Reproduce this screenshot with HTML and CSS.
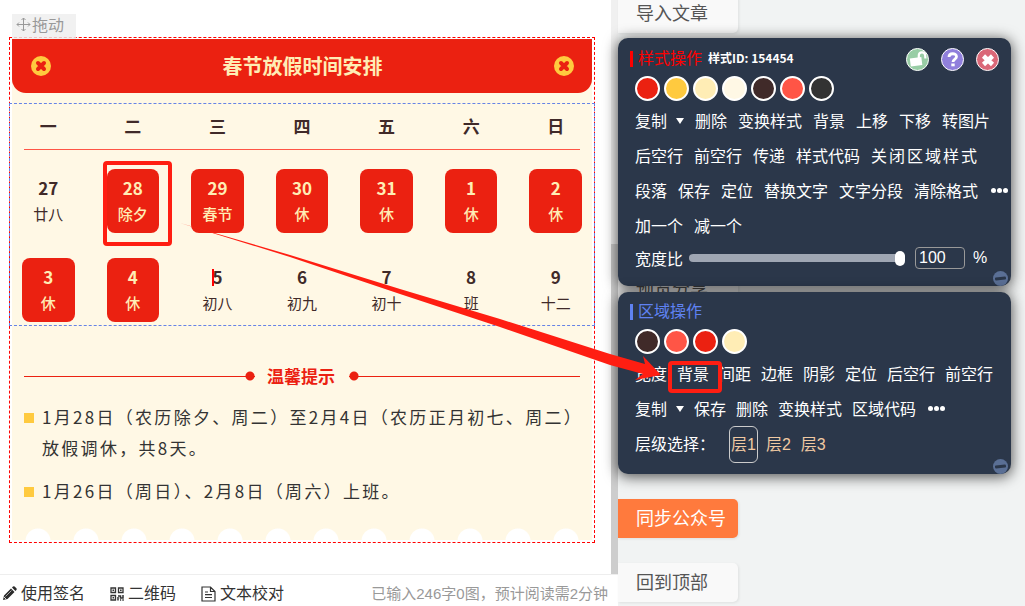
FILE: index.html
```html
<!DOCTYPE html>
<html lang="zh-CN">
<head>
    <meta charset="UTF-8">
    <meta name="viewport" content="width=device-width, initial-scale=1.0">
    <title>图文编辑器</title>
    <link rel="stylesheet" href="styles.css">
</head>
<body>
    <div class="editor">
        <main class="canvas">
            <div class="drag-tag">
                <svg width="15" height="15" viewBox="0 0 15 15" fill="none" stroke="#999"><path d="M7.5 1v13M1 7.5h13M5.5 3l2-2 2 2M5.500 12l2 2 2-2M3 5.500l-2 2 2 2M12 5.500l2 2-2 2"/></svg>拖动
            </div>
            <article class="article">
                <div class="paper">
                    <header class="title-bar">
                        <svg width="20" height="20" viewBox="0 0 20 20"><circle cx="10" cy="10" r="10" fill="#ffca3f"/><path d="M7 7l6 6M13 7l-6 6" stroke="#eb2111" stroke-width="4" stroke-linecap="round"/></svg>
                        <h1>春节放假时间安排</h1>
                        <svg width="20" height="20" viewBox="0 0 20 20"><circle cx="10" cy="10" r="10" fill="#ffca3f"/><path d="M7 7l6 6M13 7l-6 6" stroke="#eb2111" stroke-width="4" stroke-linecap="round"/></svg>
                    </header>

                    <section class="calendar-area">
                        <table class="calendar">
                            <thead>
                                <tr><th>一</th><th>二</th><th>三</th><th>四</th><th>五</th><th>六</th><th>日</th></tr>
                            </thead>
                            <tbody>
                                <tr>
                                    <td><b>27</b><span>廿八</span></td>
                                    <td class="off"><b>28</b><span>除夕</span></td>
                                    <td class="off"><b>29</b><span>春节</span></td>
                                    <td class="off"><b>30</b><span>休</span></td>
                                    <td class="off"><b>31</b><span>休</span></td>
                                    <td class="off"><b>1</b><span>休</span></td>
                                    <td class="off"><b>2</b><span>休</span></td>
                                </tr>
                                <tr>
                                    <td class="off"><b>3</b><span>休</span></td>
                                    <td class="off"><b>4</b><span>休</span></td>
                                    <td class="editing"><b>5</b><span>初八</span></td>
                                    <td><b>6</b><span>初九</span></td>
                                    <td><b>7</b><span>初十</span></td>
                                    <td><b>8</b><span>班</span></td>
                                    <td><b>9</b><span>十二</span></td>
                                </tr>
                            </tbody>
                        </table>
                    </section>

                    <section class="tips">
                        <h2 class="tips-title">温馨提示</h2>
                        <ul class="tips-list">
                            <li>1月28日（农历除夕、周二）至2月4日（农历正月初七、周二）放假调休，共8天。</li>
                            <li>1月26日（周日）、2月8日（周六）上班。</li>
                        </ul>
                    </section>
                    <div class="scallops"></div>
                </div>
            </article>
        </main>
        <div class="scrollbar"><div class="thumb"></div></div>
        <footer class="status-bar">
            <button class="tool">
                <svg width="15" height="15" viewBox="0 0 15 15" fill="#2b2b2b"><path d="M1 14l1-4.500 7-7 3.500 3.500-7 7zM10 1.500l1-1q.8-.6 1.600 0l1.800 1.800q.7.8 0 1.600l-1 1z"/><path d="M3.500 10.500l6-6" stroke="#fff" stroke-width=".6"/><path d="M2 11l2 2" stroke="#fff" stroke-width=".8"/></svg>使用签名
            </button>
            <button class="tool">
                <svg width="14" height="14" viewBox="0 0 14 14" fill="none" stroke="#333"><path d="M1 1h4.500v4.500H1zM8.500 1H13v4.500H8.500zM1 8.500h4.500V13H1z" stroke-width="1.300"/><path d="M2.500 3.300h1.600M10 3.300h1.600M2.500 10.800h1.600M8 9h2.500v2H13V8M8 10v3.500M10 13h1.200M12.300 13h1.500" stroke-width="1.500"/></svg>二维码
            </button>
            <button class="tool">
                <svg width="15" height="16" viewBox="0 0 15 16" fill="none" stroke="#333" stroke-width="1.200"><path d="M1 1h8.500L14 5.500V15H1zM9.500 1v4.500H14M4 6h3M4 8.700h7M4 11.500h7"/></svg>文本校对
            </button>
            <span class="word-count">已输入246字0图，预计阅读需2分钟</span>
        </footer>
    </div>

    <aside class="side">
        <nav class="side-nav">
            <button class="side-btn import">导入文章</button>
            <button class="side-btn preview">预览分享</button>
            <button class="side-btn sync">同步公众号</button>
            <button class="side-btn">回到顶部</button>
        </nav>

        <div class="panels">
            <section class="panel panel-style">
                <div class="panel-head">
                    <h3>样式操作</h3>
                    <small>样式ID: 154454</small>
                    <div class="head-icons">
                        <button aria-label="解锁">
                            <svg width="23" height="23" viewBox="0 0 23 23"><circle cx="11.500" cy="11.500" r="11" fill="#98cda5" stroke="#fff"/><path d="M3.800 10.500l11.500-1.500 1 8-11.500 1.500z" fill="#fff"/><path d="M12.800 10V7.500c0-4 6-4.500 6.400 0l.2 3" fill="none" stroke="#fff" stroke-width="2.200"/></svg>
                        </button>
                        <button aria-label="帮助">
                            <svg width="23" height="23" viewBox="0 0 23 23"><circle cx="11.500" cy="11.500" r="11" fill="#907fdc" stroke="#fff"/><path d="M8 9c0-4.300 7.500-4.300 7.500-.3 0 2.500-3.500 2.200-3.500 5.300" fill="none" stroke="#fff" stroke-width="2.800"/><path d="M10.300 15.500h3.400v2.800h-3.400z" fill="#fff"/></svg>
                        </button>
                        <button aria-label="关闭">
                            <svg width="23" height="23" viewBox="0 0 23 23"><circle cx="11.500" cy="11.500" r="11" fill="#da6878" stroke="#fff"/><path d="M7.500 8l9 8.500M16.500 8l-9 8.500" stroke="#fff" stroke-width="4.500"/></svg>
                        </button>
                    </div>
                </div>
                <div class="swatches">
                    <button class="c-red" aria-label="红色"></button>
                    <button class="c-yellow" aria-label="黄色"></button>
                    <button class="c-sand" aria-label="浅黄"></button>
                    <button class="c-cream" aria-label="米白"></button>
                    <button class="c-brown" aria-label="深棕"></button>
                    <button class="c-coral" aria-label="珊瑚红"></button>
                    <button class="c-dark" aria-label="深灰"></button>
                </div>
                <div class="menu-row">
                    <button class="has-arrow">复制</button><button>删除</button><button>变换样式</button><button>背景</button><button>上移</button><button>下移</button><button>转图片</button>
                </div>
                <div class="menu-row">
                    <button>后空行</button><button>前空行</button><button>传递</button><button>样式代码</button><button class="spaced">关闭区域样式</button>
                </div>
                <div class="menu-row">
                    <button>段落</button><button>保存</button><button>定位</button><button>替换文字</button><button>文字分段</button><button>清除格式</button><button class="more" aria-label="更多"><i></i><i></i><i></i></button>
                </div>
                <div class="menu-row">
                    <button>加一个</button><button>减一个</button>
                </div>
                <div class="ratio-row">
                    <label for="ratio">宽度比</label>
                    <input type="range" id="ratio" min="0" max="100" value="100">
                    <input type="text" id="ratioValue" value="100" aria-label="宽度比数值">
                    <span>%</span>
                </div>
                <button class="collapse" aria-label="收起"></button>
            </section>

            <section class="panel panel-area">
                <div class="panel-head">
                    <h3>区域操作</h3>
                </div>
                <div class="swatches">
                    <button class="c-brown" aria-label="深棕"></button>
                    <button class="c-coral" aria-label="珊瑚红"></button>
                    <button class="c-red" aria-label="红色"></button>
                    <button class="c-sand" aria-label="浅黄"></button>
                </div>
                <div class="menu-row">
                    <button>宽度</button><button>背景</button><button>间距</button><button>边框</button><button>阴影</button><button>定位</button><button>后空行</button><button>前空行</button>
                </div>
                <div class="menu-row">
                    <button class="has-arrow">复制</button><button>保存</button><button>删除</button><button>变换样式</button><button>区域代码</button><button class="more" aria-label="更多"><i></i><i></i><i></i></button>
                </div>
                <div class="menu-row layers">
                    <span>层级选择：</span><button class="current">层1</button><button>层2</button><button>层3</button>
                </div>
                <button class="collapse" aria-label="收起"></button>
            </section>
        </div>
    </aside>

    <!-- guide marks: from the day cell to the background entry -->
    <svg class="marks" width="1025" height="606" viewBox="0 0 1025 606">
        <g fill="none" stroke="#ff1e12" stroke-width="4">
            <rect x="105" y="163" width="65" height="81" rx="2"/>
            <rect x="670" y="363" width="50" height="28" rx="2"/>
        </g>
        <path d="M180 223L290 255L400 289L500 319L610 354L645 364L643 356L661 375L635 380L643 374L610 365L500 327L400 294L290 257Z" fill="#ff1e12"/>
    </svg>
</body>
</html>
```

FILE: styles.css
```css
* {
    box-sizing: border-box;
}

body {
    margin: 0;
    display: flex;
    height: 100vh;
    overflow: hidden;
    position: relative;
    font-family: "Liberation Sans", "Noto Sans CJK SC", sans-serif;
    font-size: 16px;
    color: #333;
    background-color: #f1f3f3;
}

button {
    padding: 0;
    border: none;
    background: none;
    font: inherit;
    color: inherit;
    cursor: pointer;
}

h1, h2, h3, ul {
    margin: 0;
    padding: 0;
}

/* editor */
.editor {
    flex: 1;
    display: grid;
    grid-template-columns: 1fr 7px;
    grid-template-rows: 1fr 32px;
    background-color: #fff;
}

.canvas {
    position: relative;
    padding: 37px 16px 0 9px;
    font-family: "Noto Sans CJK SC", sans-serif;
}

.drag-tag {
    position: absolute;
    left: 12px;
    top: 14px;
    z-index: 1;
    display: flex;
    align-items: center;
    gap: 1px;
    height: 25px;
    padding: 0 12px 4px 4px;
    line-height: 21px;
    background-color: rgba(238, 238, 238, 0.8);
    color: #999;
}

.article {
    border: 1px dashed #f00;
    padding: 1px 2px 2px;
}

.paper {
    background-color: #fff8e5;
}

.title-bar {
    display: flex;
    align-items: center;
    justify-content: space-between;
    height: 54px;
    padding: 0 18px 0 19px;
    background-color: #eb2111;
    border-radius: 0 0 14px 14px;
}

.title-bar h1 {
    font-size: 20px;
    line-height: 30px;
    color: #ffedb5;
}

.calendar-area {
    margin: 10px -3px 0;
    padding-bottom: 3px;
    border: 1px dashed #6683e6;
}

.calendar {
    display: block;
    margin: 0 12px;
    text-align: center;
    color: #402a29;
}

.calendar thead {
    display: block;
    background: linear-gradient(#ff5546, #ff5546) no-repeat center bottom / calc(100% - 4px) 1px;
}

.calendar tbody {
    display: grid;
    gap: 25px;
    margin-top: 19px;
}

.calendar tr {
    display: grid;
    grid-template-columns: repeat(7, 1fr);
    gap: 32px;
}

.calendar th {
    padding: 0 0 2px;
    font-size: 17px;
    line-height: 44px;
}

.calendar td {
    position: relative;
    padding: 6px 0;
    border-radius: 8px;
}

.calendar td b,
.calendar td span {
    display: block;
    font-size: 17px;
    line-height: 26px;
}

.calendar td span {
    font-size: 15px;
}

.calendar .off {
    background-color: #eb2111;
    color: #ffedb5;
}

.calendar .off span {
    font-weight: 500;
}

.calendar .editing::before {
    content: "";
    position: absolute;
    left: 21px;
    top: 11px;
    width: 2px;
    height: 17px;
    background-color: #f00;
}

.tips {
    padding: 37px 0 0 12px;
}

.tips-title {
    display: flex;
    align-items: center;
    margin-right: 12px;
    font-size: 17px;
    line-height: 26px;
    color: #eb2111;
}

.tips-title::before,
.tips-title::after {
    content: "";
    flex: 1;
    height: 10px;
    background:
        radial-gradient(circle at center, #eb2111 4px, transparent 5px) no-repeat right center / 10px 10px,
        linear-gradient(#eb2111, #eb2111) no-repeat center / 100% 1px;
    margin-right: 12px;
}

.tips-title::after {
    background-position: left center, center;
    margin: 0 0 0 14px;
}

.tips-list {
    list-style: none;
    margin-top: 12px;
    font-size: 17px;
    line-height: 31px;
    letter-spacing: 0.135em;
}

.tips-list li {
    display: flex;
    gap: 8px;
    margin-bottom: 12px;
}

.tips-list li::before {
    content: "";
    flex: none;
    width: 10px;
    height: 10px;
    margin-top: 12px;
    background-color: #ffca3f;
}

.scallops {
    height: 12px;
    margin: 22px 2px 0;
    background: radial-gradient(circle at 24px 13px, #fff 12px, transparent 13px) repeat-x 0 0 / 48px 12px;
}

.scrollbar {
    padding-top: 244px;
    background-color: #f0f0f0;
}

.scrollbar .thumb {
    height: 100%;
    background-color: #cdcdcd;
}

.status-bar {
    grid-column: 1 / 3;
    display: flex;
    align-items: center;
    gap: 25px;
    padding: 6px 10px 0 2px;
    border-top: 1px solid #eee;
    background-color: #fff;
}

.tool {
    display: flex;
    align-items: center;
    gap: 4px;
    line-height: 24px;
}

.word-count {
    margin-left: auto;
    font-size: 15px;
    line-height: 24px;
    color: #999;
}

/* right side */
.side {
    position: relative;
    width: 407px;
}

.side-nav {
    display: flex;
    flex-direction: column;
    align-items: flex-start;
}

.side-btn {
    width: 120px;
    height: 39px;
    margin-top: 25px;
    padding: 0 0 4px 18px;
    border-radius: 0 5px 5px 0;
    background-color: #f9f9f9;
    box-shadow: 1px 1px 3px rgba(0, 0, 0, 0.08);
    font-size: 18px;
    text-align: left;
    color: #555;
}

.side-btn.import {
    margin-top: -6px;
}

.side-btn.preview {
    margin-top: 236px;
}

.side-btn.sync {
    margin-top: 191px;
    background-color: #ff7a3d;
    color: #fff;
}

.panels {
    position: absolute;
    left: 0;
    right: 14px;
    top: 38px;
    display: flex;
    flex-direction: column;
    gap: 6px;
}

.panel {
    position: relative;
    padding: 8px 0 12px 17px;
    border-radius: 10px;
    background-color: #2b374a;
    box-shadow: 0 2px 14px 1px rgba(0, 0, 0, 0.65);
    color: #fff;
}

.panel-style {
    padding: 9px 0 14px 17px;
}

.panel-head {
    display: flex;
    align-items: center;
    gap: 6px;
    height: 24px;
    margin: 0 12px 5px -5px;
}

.panel-head h3 {
    display: flex;
    align-items: center;
    gap: 5px;
    font-size: 16px;
    font-weight: 400;
    line-height: 24px;
}

.panel-head h3::before {
    content: "";
    width: 3px;
    height: 16px;
    background-color: currentColor;
}

.panel-style h3 {
    color: #f00;
}

.panel-area h3 {
    color: #5f82f2;
}

.panel-head small {
    font-family: "Noto Sans CJK SC", sans-serif;
    font-size: 12px;
    font-weight: bold;
    line-height: 20px;
    padding-bottom: 2px;
}

.head-icons {
    display: flex;
    gap: 12px;
    margin-left: auto;
}

.head-icons svg {
    display: block;
}

.swatches {
    display: flex;
    gap: 4px;
    margin-bottom: 3px;
}

.swatches button {
    width: 25px;
    height: 25px;
    border: 2px solid #fff;
    border-radius: 50%;
}

.c-red { background-color: #eb2111; }
.c-yellow { background-color: #ffca3f; }
.c-sand { background-color: #ffedb5; }
.c-cream { background-color: #fff8e5; }
.c-brown { background-color: #402a29; }
.c-coral { background-color: #ff5546; }
.c-dark { background-color: #333; }

.menu-row {
    display: flex;
    align-items: center;
    gap: 11px;
    height: 35px;
    padding-bottom: 3px;
    white-space: nowrap;
}

.menu-row .has-arrow::after {
    content: "";
    display: inline-block;
    margin-left: 9px;
    border: 4px solid transparent;
    border-top: 6px solid #fff;
    border-bottom: 0;
    vertical-align: 3px;
}

.menu-row .spaced {
    letter-spacing: 2px;
}

.menu-row .more {
    display: flex;
    gap: 1px;
    margin-left: 2px;
}

.more i {
    width: 5px;
    height: 5px;
    border-radius: 50%;
    background-color: #fff;
}

.ratio-row {
    display: flex;
    align-items: center;
    height: 28px;
}

.ratio-row input[type="range"] {
    -webkit-appearance: none;
    appearance: none;
    width: 216px;
    height: 8px;
    margin: 0 10px 0 6px;
    border-radius: 4px;
    background-color: #9fa6b3;
}

.ratio-row input[type="range"]::-webkit-slider-thumb {
    -webkit-appearance: none;
    width: 10px;
    height: 15px;
    border-radius: 5px;
    background-color: #fff;
}

.ratio-row input[type="text"] {
    width: 50px;
    height: 22px;
    margin-right: 8px;
    padding: 0 3px;
    border: 1px solid #999;
    border-radius: 4px;
    background: none;
    font: inherit;
    color: #fff;
}

.panel-area .menu-row {
    gap: 10px;
}

.panel-area .layers {
    gap: 6px;
    padding-bottom: 0;
}

.layers button {
    height: 37px;
    padding: 0 1px 4px;
    border: 1px solid transparent;
    border-radius: 6px;
    color: #f0c9a2;
}

.layers span {
    margin-right: 8px;
    padding-bottom: 4px;
}

.layers .current {
    border-color: #ccc;
}

.collapse {
    position: absolute;
    right: 3px;
    bottom: 0;
    width: 15px;
    height: 15px;
    border-radius: 50%;
    background-color: #5a6f95;
}

.collapse::before {
    content: "";
    display: block;
    width: 11px;
    height: 3px;
    margin: 0 auto;
    border-radius: 1px;
    background-color: #2b374a;
    transform: rotate(-6deg);
}

/* guide marks over the whole page */
.marks {
    position: absolute;
    left: 0;
    top: 0;
    pointer-events: none;
}
```
